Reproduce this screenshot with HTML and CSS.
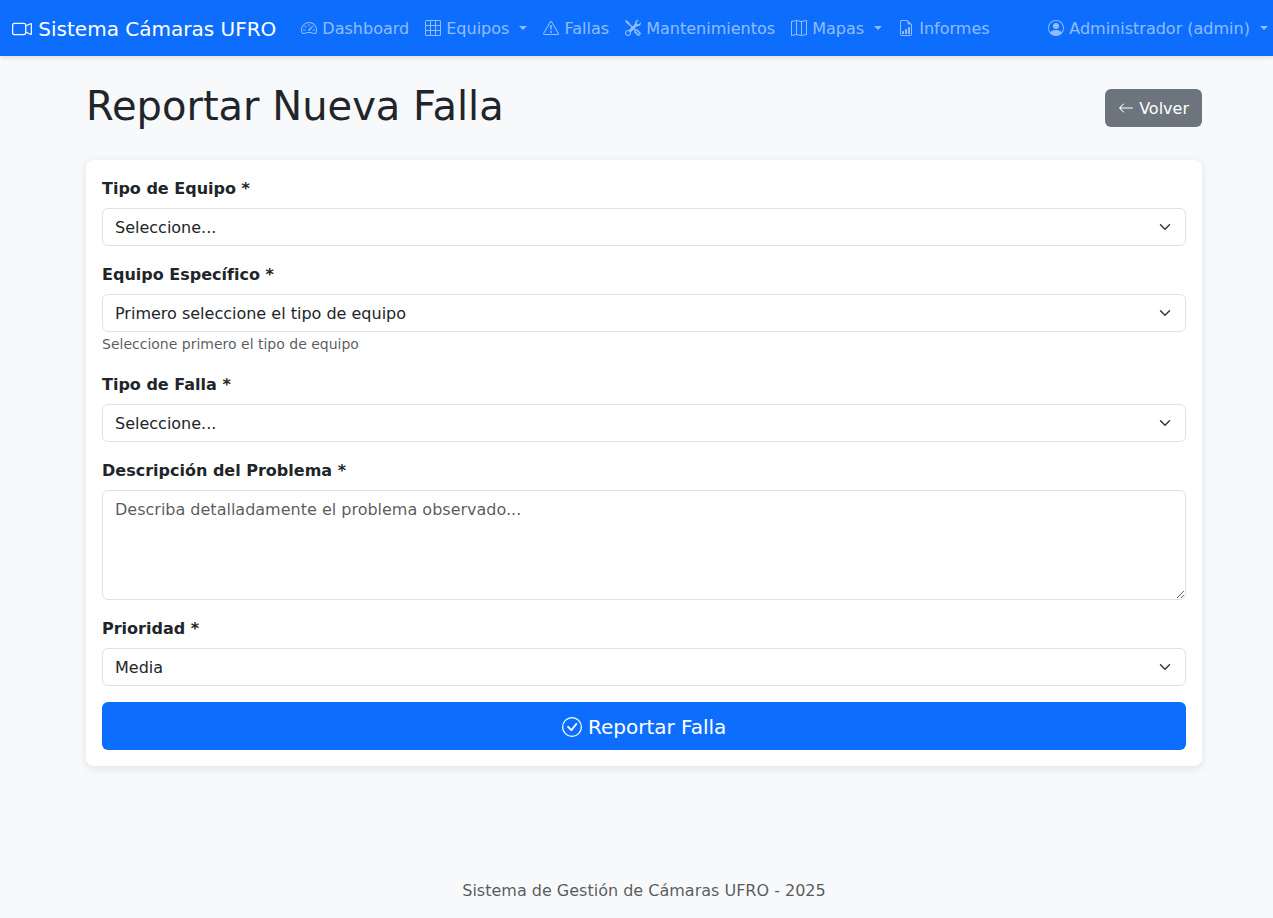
FILE: index.html
```html
<!DOCTYPE html>
<html lang="es">
<head>
<meta charset="utf-8">
<meta name="viewport" content="width=device-width, initial-scale=1">
<title>Reportar Nueva Falla</title>
<link rel="stylesheet" href="styles.css">
</head>
<body>
<nav class="navbar">
  <a class="brand" href="#"><svg class="icon" viewBox="0 0 16 16" aria-hidden="true"><path fill-rule="evenodd" d="M0 5a2 2 0 0 1 2-2h7.500a2 2 0 0 1 1.983 1.738l3.110-1.382A1 1 0 0 1 16 4.269v7.462a1 1 0 0 1-1.406.913l-3.111-1.382A2 2 0 0 1 9.500 13H2a2 2 0 0 1-2-2zm11.500 5.175 3.500 1.556V4.269l-3.500 1.556zM2 4a1 1 0 0 0-1 1v6a1 1 0 0 0 1 1h7.500a1 1 0 0 0 1-1V5a1 1 0 0 0-1-1z"/></svg> Sistema Cámaras UFRO</a>
  <div class="nav-links">
    <a class="nav-link" href="#"><svg class="icon" viewBox="0 0 16 16" aria-hidden="true"><path d="M8 4a.5.5 0 0 1 .5.5V6a.5.5 0 0 1-1 0V4.500A.5.5 0 0 1 8 4M3.732 5.732a.5.5 0 0 1 .707 0l.915.914a.5.5 0 1 1-.708.708l-.914-.915a.5.5 0 0 1 0-.707M2 10a.5.5 0 0 1 .5-.5h1.586a.5.5 0 0 1 0 1H2.500A.5.5 0 0 1 2 10m9.500 0a.5.5 0 0 1 .5-.5h1.500a.5.5 0 0 1 0 1H12a.5.5 0 0 1-.5-.5m.754-4.246a.39.39 0 0 0-.527-.020L7.547 9.310a.91.91 0 1 0 1.302 1.258l3.434-4.297a.39.39 0 0 0-.029-.518z"/><path fill-rule="evenodd" d="M0 10a8 8 0 1 1 15.547 2.661c-.442 1.253-1.845 1.602-2.932 1.250C11.309 13.488 9.475 13 8 13c-1.474 0-3.310.488-4.615.911-1.087.352-2.490.003-2.932-1.250A8 8 0 0 1 0 10m8-7a7 7 0 0 0-6.603 9.329c.203.575.923.876 1.680.630C4.397 12.533 6.358 12 8 12s3.604.532 4.923.960c.757.245 1.477-.056 1.680-.631A7 7 0 0 0 8 3"/></svg> Dashboard</a>
    <a class="nav-link dropdown" href="#"><svg class="icon" viewBox="0 0 16 16" aria-hidden="true"><path d="M0 1.500A1.500 1.500 0 0 1 1.500 0h13A1.500 1.500 0 0 1 16 1.500v13a1.500 1.500 0 0 1-1.500 1.500h-13A1.500 1.500 0 0 1 0 14.500zM1.500 1a.5.5 0 0 0-.5.5V5h4V1zM5 6H1v4h4zm1 4h4V6H6zm-1 1H1v3.500a.5.5 0 0 0 .5.5H5zm1 0v4h4v-4zm5 0v4h3.500a.5.5 0 0 0 .5-.5V11zm0-1h4V6h-4zm0-5h4V1.500a.5.5 0 0 0-.5-.5H11zm-1 0V1H6v4z"/></svg> Equipos </a>
    <a class="nav-link" href="#"><svg class="icon" viewBox="0 0 16 16" aria-hidden="true"><path d="M7.938 2.016A.13.13 0 0 1 8.002 2a.13.13 0 0 1 .063.016.15.15 0 0 1 .054.057l6.857 11.667c.036.060.035.124.002.183a.2.2 0 0 1-.054.060.1.1 0 0 1-.066.017H1.146a.1.1 0 0 1-.066-.017.2.2 0 0 1-.054-.060.18.18 0 0 1 .002-.183L7.884 2.073a.15.15 0 0 1 .054-.057m1.044-.450a1.130 1.130 0 0 0-1.960 0L.165 13.233c-.457.778.091 1.767.980 1.767h13.713c.889 0 1.438-.990.980-1.767z"/><path d="M7.002 12a1 1 0 1 1 2 0 1 1 0 0 1-2 0M7.100 5.995a.905.905 0 1 1 1.800 0l-.350 3.507a.552.552 0 0 1-1.100 0z"/></svg> Fallas</a>
    <a class="nav-link" href="#"><svg class="icon" viewBox="0 0 16 16" aria-hidden="true"><path d="M1 0 0 1l2.200 3.081a1 1 0 0 0 .815.419h.070a1 1 0 0 1 .708.293l2.675 2.675-2.617 2.654A3.003 3.003 0 0 0 0 13a3 3 0 1 0 5.878-.851l2.654-2.617.968.968-.305.914a1 1 0 0 0 .242 1.023l3.270 3.270a.997.997 0 0 0 1.414 0l1.586-1.586a.997.997 0 0 0 0-1.414l-3.270-3.270a1 1 0 0 0-1.023-.242L10.500 9.500l-.960-.960 2.680-2.643A3.005 3.005 0 0 0 16 3q0-.405-.102-.777l-2.140 2.141L12 4l-.364-1.757L13.777.102a3 3 0 0 0-3.675 3.680L7.462 6.460 4.793 3.793a1 1 0 0 1-.293-.707v-.071a1 1 0 0 0-.419-.814zm9.646 10.646a.5.5 0 0 1 .708 0l2.914 2.915a.5.5 0 0 1-.707.707l-2.915-2.914a.5.5 0 0 1 0-.708M3 11l.471.242.529.026.287.445.445.287.026.529L5 13l-.242.471-.026.529-.445.287-.287.445-.529.026L3 15l-.471-.242L2 14.732l-.287-.445L1.268 14l-.026-.529L1 13l.242-.471.026-.529.445-.287.287-.445.529-.026z"/></svg> Mantenimientos</a>
    <a class="nav-link dropdown" href="#"><svg class="icon" viewBox="0 0 16 16" aria-hidden="true"><path fill-rule="evenodd" d="M15.817.113A.5.5 0 0 1 16 .500v14a.5.5 0 0 1-.402.490l-5 1a.5.5 0 0 1-.196 0L5.500 15.010l-4.902.980A.5.5 0 0 1 0 15.500v-14a.5.5 0 0 1 .402-.490l5-1a.5.5 0 0 1 .196 0L10.500.990l4.902-.980a.5.5 0 0 1 .415.103M10 1.910l-4-.800v12.980l4 .800zm1 12.980 4-.800V1.110l-4 .800zm-6-.800V1.110l-4 .800v12.980z"/></svg> Mapas </a>
    <a class="nav-link" href="#"><svg class="icon" viewBox="0 0 16 16" aria-hidden="true"><path d="M10 13.500a.5.5 0 0 0 .5.5h1a.5.5 0 0 0 .5-.5v-6a.5.5 0 0 0-.5-.5h-1a.5.5 0 0 0-.5.5zm-2.500.500a.5.5 0 0 1-.5-.5v-4a.5.5 0 0 1 .5-.5h1a.5.5 0 0 1 .5.5v4a.5.5 0 0 1-.5.5zm-3 0a.5.5 0 0 1-.5-.5v-2a.5.5 0 0 1 .5-.5h1a.5.5 0 0 1 .5.5v2a.5.5 0 0 1-.5.5z"/><path d="M14 14V4.500L9.500 0H4a2 2 0 0 0-2 2v12a2 2 0 0 0 2 2h8a2 2 0 0 0 2-2M9.500 3A1.500 1.500 0 0 0 11 4.500h2V14a1 1 0 0 1-1 1H4a1 1 0 0 1-1-1V2a1 1 0 0 1 1-1h5.500z"/></svg> Informes</a>
  </div>
  <a class="nav-link dropdown user-link" href="#"><svg class="icon" viewBox="0 0 16 16" aria-hidden="true"><path d="M11 6a3 3 0 1 1-6 0 3 3 0 0 1 6 0"/><path fill-rule="evenodd" d="M0 8a8 8 0 1 1 16 0A8 8 0 0 1 0 8m8-7a7 7 0 0 0-5.468 11.370C3.242 11.226 4.805 10 8 10s4.757 1.225 5.468 2.370A7 7 0 0 0 8 1"/></svg> Administrador (admin) </a>
</nav>

<main class="page">
  <header class="page-header">
    <h1 class="title">Reportar Nueva Falla</h1>
    <a class="btn btn-secondary" href="#"><svg class="icon" viewBox="0 0 16 16" aria-hidden="true"><path fill-rule="evenodd" d="M15 8a.5.5 0 0 0-.5-.5H2.707l3.147-3.146a.5.5 0 1 0-.708-.708l-4 4a.5.5 0 0 0 0 .708l4 4a.5.5 0 0 0 .708-.708L2.707 8.500H14.500A.5.5 0 0 0 15 8"/></svg> Volver</a>
  </header>

  <form class="card">
    <div class="field">
      <label class="label" for="tipo-equipo">Tipo de Equipo *</label>
      <select class="control select" id="tipo-equipo"><option>Seleccione...</option></select>
    </div>
    <div class="field">
      <label class="label" for="equipo">Equipo Específico *</label>
      <select class="control select" id="equipo" aria-describedby="equipo-ayuda"><option>Primero seleccione el tipo de equipo</option></select>
      <small class="hint" id="equipo-ayuda">Seleccione primero el tipo de equipo</small>
    </div>
    <div class="field">
      <label class="label" for="tipo-falla">Tipo de Falla *</label>
      <select class="control select" id="tipo-falla"><option>Seleccione...</option></select>
    </div>
    <div class="field">
      <label class="label" for="descripcion">Descripción del Problema *</label>
      <textarea class="control textarea" id="descripcion" rows="4" placeholder="Describa detalladamente el problema observado..."></textarea>
    </div>
    <div class="field">
      <label class="label" for="prioridad">Prioridad *</label>
      <select class="control select" id="prioridad"><option>Media</option></select>
    </div>
    <button class="btn btn-primary" type="submit"><svg class="icon" viewBox="0 0 16 16" aria-hidden="true"><path d="M8 15A7 7 0 1 1 8 1a7 7 0 0 1 0 14m0 1A8 8 0 1 0 8 0a8 8 0 0 0 0 16"/><path d="m10.970 4.970-.020.022-3.473 4.425-2.093-2.094a.75.75 0 0 0-1.060 1.060L6.970 11.030a.75.75 0 0 0 1.079-.020l3.992-4.990a.75.75 0 0 0-1.071-1.050"/></svg> Reportar Falla</button>
  </form>
</main>

<footer class="footer">Sistema de Gestión de Cámaras UFRO - 2025</footer>
</body>
</html>
```

FILE: styles.css
```css
*, *::before, *::after {
  box-sizing: border-box;
}

body {
  margin: 0;
  background: #f8f9fa;
  color: #212529;
  font-family: Verdana, "DejaVu Sans", sans-serif;
  font-size: 16px;
  line-height: 24px;
}

.icon {
  display: inline-block;
  width: 1em;
  height: 1em;
  fill: currentColor;
  vertical-align: -0.125em;
}

/* Navigation */
.navbar {
  display: flex;
  align-items: center;
  min-height: 56px;
  padding: 2px 0 0 12px;
  background: #0d6efd;
  box-shadow: 0 2px 4px rgba(0, 0, 0, 0.1);
  white-space: nowrap;
}

.brand {
  margin-right: 17px;
  color: #fff;
  font-size: 20px;
  line-height: 30px;
  text-decoration: none;
}

.nav-links {
  display: flex;
}

.nav-link {
  padding: 8px;
  color: rgba(255, 255, 255, 0.55);
  text-decoration: none;
  white-space: pre;
}

.dropdown::after {
  content: "";
  display: inline-block;
  margin-left: 5px;
  border: 4px solid transparent;
  border-top-color: currentColor;
  border-bottom: 0;
  vertical-align: 4px;
}

.user-link {
  margin-left: auto;
  padding-right: 5px;
}

/* Page */
.page {
  width: calc(100% - 24px);
  max-width: 1131px;
  margin: 24px auto 0;
  padding-left: 15px;
}

.page-header {
  display: flex;
  justify-content: space-between;
  align-items: center;
  margin-bottom: 24px;
}

.title {
  margin: 0;
  padding: 2px 0 6px;
  font-size: 40px;
  font-weight: 500;
  line-height: 48px;
}

.btn {
  border: 1px solid transparent;
  border-radius: 6px;
  color: #fff;
  font-family: inherit;
  text-align: center;
  text-decoration: none;
  cursor: pointer;
}

.btn-secondary {
  padding: 7px 12px 5px;
  background: #6c757d;
}

.btn-primary {
  width: 100%;
  padding: 9px 16px 7px;
  background: #0d6efd;
  font-size: 20px;
  line-height: 30px;
}

.card {
  padding: 17px 16px 16px;
  border-radius: 8px;
  background: #fff;
  box-shadow: 0 2px 8px rgba(0, 0, 0, 0.1);
}

.field {
  margin-bottom: 16px;
}

.label {
  display: block;
  margin-bottom: 7px;
  font-weight: 700;
}

.field + .field .label {
  padding-top: 1px;
}

.control {
  display: block;
  width: 100%;
  padding: 7px 12px 5px;
  border: 1px solid #dee2e6;
  border-radius: 6px;
  background-color: #fff;
  color: #212529;
  font: inherit;
}

.select {
  appearance: none;
  padding-right: 36px;
  background-image: url("data:image/svg+xml,%3csvg xmlns='http://www.w3.org/2000/svg' viewBox='0 0 16 16'%3e%3cpath fill='none' stroke='%23343a40' stroke-linecap='round' stroke-linejoin='round' stroke-width='2' d='m2 5 6 6 6-6'/%3e%3c/svg%3e");
  background-repeat: no-repeat;
  background-position: right 12px center;
  background-size: 16px 12px;
}

.textarea {
  resize: vertical;
}

.textarea::placeholder {
  color: rgba(33, 37, 41, 0.75);
  opacity: 1;
}

.hint {
  color: rgba(33, 37, 41, 0.75);
  font-size: 14px;
}

.footer {
  margin-top: 96px;
  padding: 17px 0 15px 15px;
  color: rgba(33, 37, 41, 0.75);
  text-align: center;
}
```
